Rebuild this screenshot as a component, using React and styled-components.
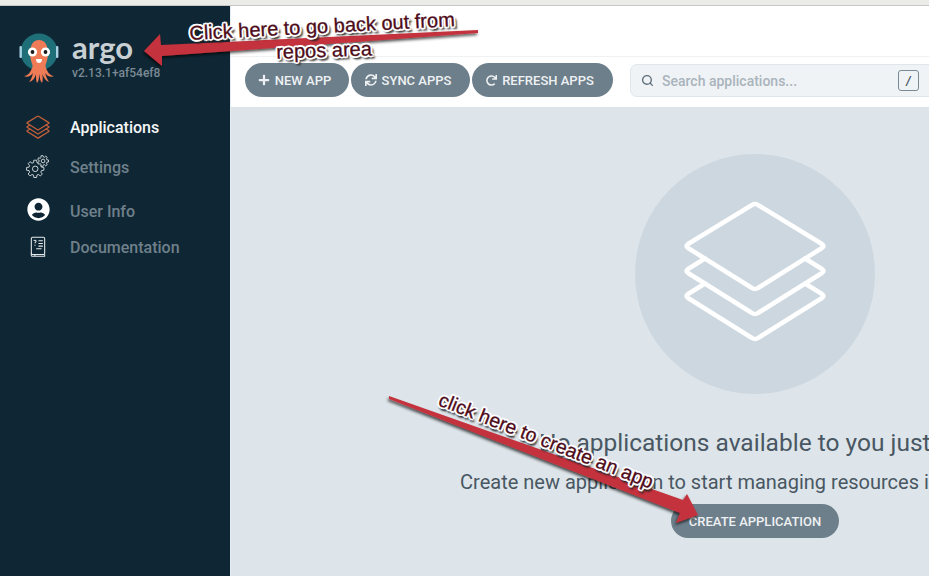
import React from "react";
import styled, { createGlobalStyle } from "styled-components";
import { FaPlus, FaSync, FaRedo, FaUserCircle } from "react-icons/fa";
import { Search } from "lucide-react";

const Global = createGlobalStyle`
  html, body { margin: 0; padding: 0; width: 929px; height: 576px; overflow: hidden; background: #fff; }
  * { box-sizing: border-box; }
`;

const Page = styled.div`
  position: relative;
  width: 929px;
  height: 576px;
  overflow: hidden;
  display: flex;
  flex-direction: column;
  font-family: Roboto, "Liberation Sans", sans-serif;
`;
const BrowserStrip = styled.div`
  flex: 0 0 6px;
  background: #ebebe8;
  border-bottom: 1px solid #c6c6c4;
`;
const Body = styled.div`
  flex: 1;
  display: flex;
  min-height: 0;
`;
const Sidebar = styled.aside`
  flex: 0 0 230px;
  background: #0f2734;
  display: flex;
  flex-direction: column;
`;
const Brand = styled.div`
  display: flex;
  align-items: flex-start;
  gap: 13px;
  padding: 26px 0 0 19px;
  height: 103px;
`;
const BrandText = styled.div`
  display: flex;
  flex-direction: column;
`;
const Wordmark = styled.div`
  font-family: Lato, sans-serif;
  font-size: 31px;
  font-weight: 700;
  line-height: 30px;
  color: #c9d0d4;
`;
const Version = styled.div`
  font-size: 12px;
  font-weight: 500;
  line-height: 14px;
  margin-top: 4px;
  color: #7b8a94;
`;
const Nav = styled.nav`
  display: flex;
  flex-direction: column;
`;
const NavItem = styled.div`
  display: flex;
  align-items: center;
  height: 36px;
  margin-top: ${(p) => p.$top || 0}px;
  padding-left: 26px;
  font-size: 16px;
  font-weight: 500;
  color: ${(p) => (p.$active ? "#f4f6f7" : "#6f808b")};
`;
const NavIcon = styled.span`
  flex: 0 0 24px;
  width: 24px;
  height: 24px;
  margin-right: 20px;
  margin-bottom: ${(p) => p.$lift || 0}px;
  display: flex;
  align-items: center;
  justify-content: center;
  color: #fff;
`;
const Main = styled.main`
  flex: 0 0 1049px;
  display: flex;
  flex-direction: column;
  border-left: 1px solid #e6edf1;
`;
const TopBar = styled.div`
  flex: 0 0 51px;
  background: #fff;
  border-bottom: 1px solid #f0f1f2;
`;
const Toolbar = styled.div`
  flex: 0 0 50px;
  background: #fff;
  display: flex;
  align-items: flex-start;
  padding: 6px 0 0 14px;
  gap: 2px;
`;
const ToolButton = styled.button`
  height: 34px;
  width: ${(p) => p.$w}px;
  padding: 0 5px 0 0;
  border: 0;
  border-radius: 17px;
  background: #6d7f8b;
  color: #eef1f3;
  font-family: inherit;
  font-size: 13px;
  font-weight: 500;
  display: flex;
  align-items: center;
  justify-content: center;
  gap: 5px;
  white-space: nowrap;
`;
const SearchBox = styled.div`
  margin: 1px 0 0 15px;
  width: 310px;
  height: 33px;
  flex: none;
  display: flex;
  align-items: center;
  padding-left: 10px;
  gap: 8px;
  border: 1px solid #dfe6ec;
  border-radius: 7px;
  background: #f0f3f6;
  color: #5e6e79;
`;
const Placeholder = styled.span`
  font-size: 14px;
  font-weight: 500;
  color: #a9b4bc;
  flex: none;
  width: 228px;
`;
const Kbd = styled.span`
  flex: none;
  width: 21px;
  height: 21px;
  border: 1px solid #7a8a95;
  border-radius: 3px;
  display: flex;
  align-items: center;
  justify-content: center;
  font-size: 12px;
  font-style: italic;
  font-weight: 700;
  color: #495763;
`;
const Content = styled.section`
  flex: 1;
  background: #dde5ea;
  display: flex;
  flex-direction: column;
  align-items: center;
  padding-top: 47px;
`;
const Circle = styled.div`
  width: 240px;
  height: 240px;
  border-radius: 50%;
  background: #cdd7df;
  display: flex;
  align-items: center;
  justify-content: center;
`;
const Heading = styled.h2`
  margin: 35px 0 0;
  padding-right: 2px;
  font-size: 24.5px;
  font-weight: 400;
  line-height: 28px;
  color: #495763;
  white-space: nowrap;
`;
const Sub = styled.p`
  margin: 13px 0 0;
  padding-right: 1px;
  font-size: 20px;
  font-weight: 400;
  line-height: 24px;
  color: #495763;
  white-space: nowrap;
`;
const CreateButton = styled(ToolButton)`
  margin-top: 10px;
  padding: 0;
`;
const Overlay = styled.svg`
  position: absolute;
  left: 0;
  top: 0;
  width: 929px;
  height: 576px;
  pointer-events: none;
`;
const Callout = styled.div`
  position: absolute;
  left: ${(p) => p.$x}px;
  top: ${(p) => p.$y}px;
  transform: translate(-50%, -50%) rotate(${(p) => p.$r}deg);
  font-family: "Liberation Sans", Arial, sans-serif;
  font-size: ${(p) => p.$s}px;
  line-height: 1;
  white-space: nowrap;
  color: #4e0c1a;
  -webkit-text-stroke: 0.3px #4e0c1a;
  text-shadow: -1.5px -1.5px 0 #fff, 1.5px -1.5px 0 #fff, -1.5px 1.5px 0 #fff, 1.5px 1.5px 0 #fff,
    0 -2px 0 #fff, 0 2px 0 #fff, -2px 0 0 #fff, 2px 0 0 #fff, 3px 3px 2px #222, 1px 3px 2px #222;
`;

const gearPath = (cx, cy, outer, inner, teeth) => {
  const pts = [];
  const step = (Math.PI * 2) / teeth;
  for (let i = 0; i < teeth; i++) {
    const a = i * step;
    [[-0.34, inner], [-0.2, outer], [0.2, outer], [0.34, inner]].forEach(([k, r]) => {
      const t = a + k * step;
      pts.push(`${(cx + r * Math.cos(t)).toFixed(2)} ${(cy + r * Math.sin(t)).toFixed(2)}`);
    });
  }
  return `M${pts.join("L")}Z`;
};

const Mascot = () => (
  <svg width="40" height="52" viewBox="0 0 40 52">
    <circle cx="20" cy="20" r="18.500" fill="#1f6f78" />
    <rect x="0.500" y="14" width="2.400" height="12" rx="1" fill="#a9d3e4" />
    <rect x="37" y="14" width="2.400" height="12" rx="1" fill="#a9d3e4" />
    <path d="M11 22C11 13 14 8 20 8s9 5 9 14c0 5-2 9-3 13l-12 0c-1-4-3-8-3-13Z" fill="#ef7b57" />
    <path d="M14 33C12 40 9 44 5 44c3 2 7 0 9-3-1 4-2 7-4 9 4-1 6-4 7-8 0 4 0 7 1 9 2-2 2-5 2-9 1 4 1 7 3 9 1-3 1-6 0-9 2 4 4 7 7 8-2-3-3-6-4-9 2 3 6 5 9 3-4 0-7-4-9-11Z" fill="#ef7b57" />
    <circle cx="13.500" cy="20" r="4.600" fill="#fff" />
    <circle cx="26.500" cy="20" r="4.600" fill="#fff" />
    <circle cx="13.500" cy="20" r="1.900" fill="#1a1a1a" />
    <circle cx="26.500" cy="20" r="1.900" fill="#1a1a1a" />
    <path d="M17 27h6c0 3-1.400 4-3 4s-3-1-3-4Z" fill="#fff" />
  </svg>
);

const Layers = ({ width, height, color, sw }) => (
  <svg width={width} height={height} viewBox="0 0 148 150" fill="none" stroke={color} strokeWidth={sw} strokeLinejoin="round" strokeLinecap="round">
    <path d="M24 84.500 7 95Q4 97 7 99L71 139Q74 141 77 139L141 99Q144 97 141 95L124 84.500" />
    <path d="M24 59.500 7 70Q4 72 7 74L71 114Q74 116 77 114L141 74Q144 72 141 70L124 59.500" />
    <path d="M71 6Q74 4 77 6L141 45Q144 47 141 49L77 89Q74 91 71 89L7 49Q4 47 7 45Z" />
  </svg>
);

const GearIcon = () => (
  <svg width="26" height="26" viewBox="0 0 26 26" fill="none" stroke="#d7dde0" strokeWidth="1">
    <path d={gearPath(10, 15, 9.500, 7, 8)} />
    <circle cx="10" cy="15" r="3" />
    <path d={gearPath(18.500, 6.500, 6, 4.300, 7)} fill="#0f2734" />
    <circle cx="18.500" cy="6.500" r="2" />
  </svg>
);

const DocIcon = () => (
  <svg width="16" height="22" viewBox="0 0 18 24" fill="none" stroke="#e5e9eb" strokeWidth="1.200">
    <rect x="1.500" y="1" width="15" height="19.500" rx="1.500" />
    <path d="M1.500 18.500v3a1 1 0 0 0 1 1h3M5.500 20.500v2.500M5.500 22.500h11v-2" />
    <path d="M9.500 5h5M9.500 8h5M9.500 11h5M7 14h6" />
    <path d="M4.300 5.200c.4-1.200 2.500-1 2.500.3 0 1-1.200 1-1.200 2.200M5.600 9.600v1" />
  </svg>
);

export default function App() {
  return (
    <Page>
      <Global />
      <BrowserStrip />
      <Body>
        <Sidebar>
          <Brand>
            <Mascot />
            <BrandText>
              <Wordmark>argo</Wordmark>
              <Version>v2.13.1+af54ef8</Version>
            </BrandText>
          </Brand>
          <Nav>
            <NavItem $active>
              <NavIcon><Layers width={25} height={25} color="#c8603a" sw={7.500} /></NavIcon>
              Applications
            </NavItem>
            <NavItem $top={4}>
              <NavIcon><GearIcon /></NavIcon>
              Settings
            </NavItem>
            <NavItem $top={8}>
              <NavIcon $lift={4}><FaUserCircle size={23} /></NavIcon>
              User Info
            </NavItem>
            <NavItem>
              <NavIcon><DocIcon /></NavIcon>
              Documentation
            </NavItem>
          </Nav>
        </Sidebar>
        <Main>
          <TopBar />
          <Toolbar>
            <ToolButton $w={104}><FaPlus size={12} />NEW APP</ToolButton>
            <ToolButton $w={119}><FaSync size={12} />SYNC APPS</ToolButton>
            <ToolButton $w={141}><FaRedo size={11} />REFRESH APPS</ToolButton>
            <SearchBox>
              <Search size={13} strokeWidth={2.500} />
              <Placeholder>Search applications...</Placeholder>
              <Kbd>/</Kbd>
            </SearchBox>
          </Toolbar>
          <Content>
            <Circle><Layers width={148} height={150} color="#fff" sw={4.500} /></Circle>
            <Heading>No applications available to you just yet</Heading>
            <Sub>Create new application to start managing resources in your cluster</Sub>
            <CreateButton $w={168}>CREATE APPLICATION</CreateButton>
          </Content>
        </Main>
      </Body>
      <Overlay viewBox="0 0 929 576">
        <defs>
          <filter id="arrowShadow" x="-10%" y="-30%" width="120%" height="160%">
            <feDropShadow dx="-1" dy="2" stdDeviation="1.500" floodColor="#000" floodOpacity="0.7" />
          </filter>
        </defs>
        <polygon filter="url(#arrowShadow)" fill="#c4323c" points="144,51 160,34 161,45 478,30 478,33 162,56 162,66" />
        <polygon filter="url(#arrowShadow)" fill="#c4323c" points="389,396 683,500 687,494 698,515 676,523 680,513 389,399" />
      </Overlay>
      <Callout $x={322} $y={26} $r={-3} $s={20}>Click here to go back out from</Callout>
      <Callout $x={324} $y={50} $r={-2} $s={20}>repos area</Callout>
      <Callout $x={546} $y={441} $r={21.500} $s={19.500}>click here to create an app</Callout>
    </Page>
  );
}
